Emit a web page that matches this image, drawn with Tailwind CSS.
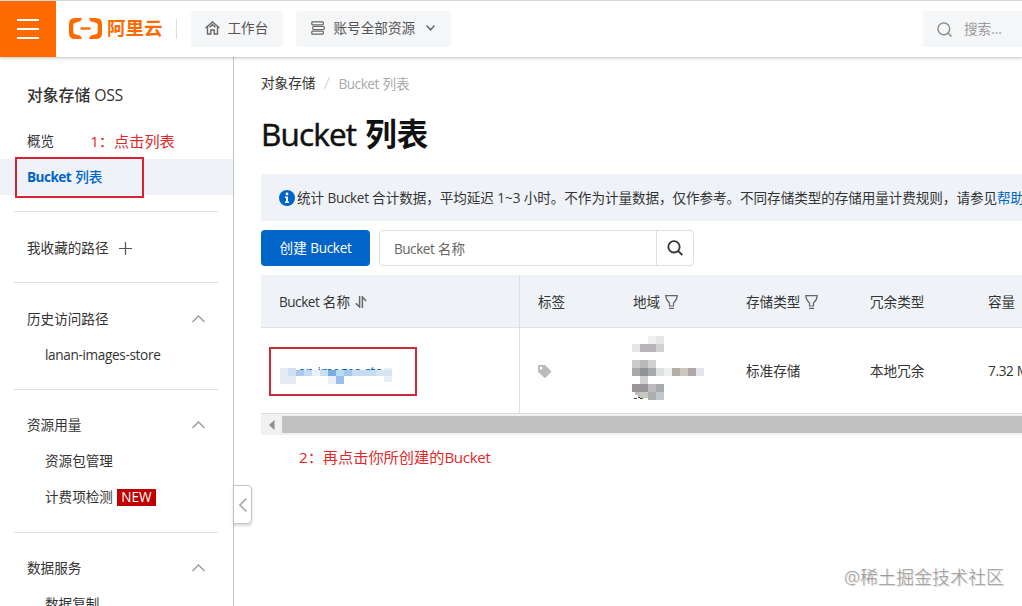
<!DOCTYPE html>
<html lang="zh-CN">
<head>
<meta charset="utf-8">
<title>Bucket 列表</title>
<script src="https://cdn.jsdelivr.net/npm/@tailwindcss/browser@4"></script>
</head>
<body class="relative flex h-[606px] w-[1022px] flex-col overflow-hidden bg-white font-['Open_Sans','Noto_Sans_CJK_SC',sans-serif] text-[13.6px] leading-5 whitespace-nowrap text-[#333]">

<!-- Top bar -->
<header class="relative z-10 flex h-[57px] shrink-0 items-center border-t border-[#d8d8d8] bg-white shadow-[0_1px_3px_rgba(0,0,0,0.25)]">
  <button class="flex h-[56px] w-[56px] items-center justify-center bg-[#ff6a00]">
    <svg class="h-[20px] w-[22px]" viewBox="0 0 22 20" stroke="#fff" stroke-width="2"><path d="M0 1h22M0 10h22M0 19h22"/></svg>
  </button>
  <svg class="mb-[2px] ml-[13px] h-[21px] w-[34px]" viewBox="0 0 34 21" fill="#ff6a00">
    <path d="M13 0H6Q0 0 0 6v9q0 6 6 6h7l-1.500-3.300-5.300-1.400Q4.300 15.900 4.300 14V7q0-1.900 1.900-2.300l5.300-1.400z"/>
    <path d="M20 0h7q6 0 6 6v9q0 6-6 6h-7l1.500-3.300 5.300-1.400q1.900-.4 1.900-2.300V7q0-1.900-1.900-2.300l-5.300-1.400z"/>
    <path d="M11.500 9.300h10v2.400h-10z"/>
  </svg>
  <span class="mb-[2px] ml-[4px] text-[18.500px] leading-6 font-bold text-[#ff6a00]">阿里云</span>
  <span class="ml-[13px] h-5 w-px bg-[#ddd]"></span>
  <button class="ml-[14px] flex h-[36px] w-[92px] items-center rounded-sm bg-[#f5f6f7] pb-[2px] pl-[14px] text-[#555]">
    <svg class="h-[14px] w-[15px]" viewBox="0 0 15 14" fill="none" stroke="#666" stroke-width="1.400"><path d="M.6 7 7.500 1l6.900 6M2.500 6v7h3.300V9h3.400v4h3.300V6M4.500 6.300l3-2.600 3 2.600"/></svg>
    <span class="ml-[8px]">工作台</span>
  </button>
  <button class="ml-[13px] flex h-[36px] w-[155px] items-center rounded-sm bg-[#f5f6f7] pb-[2px] pl-[15px] text-[#555]">
    <svg class="h-[14px] w-[14px]" viewBox="0 0 14 14" fill="none" stroke="#666" stroke-width="1.200"><rect x=".8" y=".8" width="11.500" height="3" rx=".8"/><rect x="1.800" y="5.500" width="11.500" height="3" rx=".8"/><rect x=".8" y="10.200" width="11.500" height="3" rx=".8"/></svg>
    <span class="ml-[9px]">账号全部资源</span>
    <svg class="ml-[11px] h-[6px] w-[9px]" viewBox="0 0 9 6" fill="none" stroke="#666" stroke-width="1.500"><path d="m.5.5 4 4.300 4-4.300"/></svg>
  </button>
  <div class="ml-auto flex h-[36px] w-[99px] items-center bg-[#f5f6f7] pl-[14px] text-[#999]">
    <svg class="h-[15px] w-[15px]" viewBox="0 0 15 15" fill="none" stroke="#888" stroke-width="1.400"><circle cx="6.800" cy="6.800" r="5.900"/><path d="m11 11 3.500 3.500"/></svg>
    <span class="ml-[12px]">搜索...</span>
  </div>
</header>

<div class="flex min-h-0 flex-1">
  <!-- Sidebar -->
  <aside class="relative flex h-[549px] w-[234px] shrink-0 flex-col border-r border-[#c4c4c4]">
    <h2 class="flex h-[66px] shrink-0 items-center pt-[9px] pl-[27px] text-[15.800px] font-medium">对象存储<span class="ml-1 font-normal tracking-[-0.3px]">OSS</span></h2>
    <a class="flex h-[36px] shrink-0 items-center pl-[27px]">概览<span class="ml-[36px] text-[15.200px] text-[#e02a2a]">1：点击列表</span></a>
    <a class="relative flex h-[36px] shrink-0 items-center bg-[#eff3f8] pl-[27px] font-bold text-[#0064c8]"><span class="tracking-[-0.55px]">Bucket</span><span class="ml-1 font-medium">列表</span>
      <span class="absolute top-[-2px] left-[15px] h-[41px] w-[129px] border-2 border-[#d8222f]"></span>
    </a>
    <hr class="mt-4 mr-[15px] ml-[14px] shrink-0 border-[#dedede]">
    <div class="mt-[18px] flex h-[36px] shrink-0 items-center pl-[27px]">我收藏的路径
      <svg class="ml-[10px] h-[13px] w-[13px]" viewBox="0 0 13 13" stroke="#555" stroke-width="1.200"><path d="M6.500 0v13M0 6.500h13"/></svg>
    </div>
    <hr class="mt-4 mr-[15px] ml-[14px] shrink-0 border-[#dedede]">
    <div class="mt-[18px] flex h-[36px] shrink-0 items-center justify-between pr-[28px] pl-[27px]">历史访问路径
      <svg class="h-[8px] w-[13px]" viewBox="0 0 13 8" fill="none" stroke="#999" stroke-width="1.300"><path d="m.5 7 6-6 6 6"/></svg>
    </div>
    <a class="flex h-[36px] shrink-0 items-center pl-[45px] tracking-[-0.35px]">lanan-images-store</a>
    <hr class="mt-4 mr-[15px] ml-[14px] shrink-0 border-[#dedede]">
    <div class="mt-[17px] flex h-[36px] shrink-0 items-center justify-between pr-[28px] pl-[27px]">资源用量
      <svg class="h-[8px] w-[13px]" viewBox="0 0 13 8" fill="none" stroke="#999" stroke-width="1.300"><path d="m.5 7 6-6 6 6"/></svg>
    </div>
    <a class="flex h-[36px] shrink-0 items-center pl-[45px]">资源包管理</a>
    <a class="flex h-[36px] shrink-0 items-center pl-[45px]">计费项检测<span class="ml-1 flex h-[17px] w-[39px] items-center justify-center bg-[#c00000] text-white">NEW</span></a>
    <hr class="mt-[17px] mr-[15px] ml-[14px] shrink-0 border-[#dedede]">
    <div class="mt-[17px] flex h-[36px] shrink-0 items-center justify-between pr-[28px] pl-[27px]">数据服务
      <svg class="h-[8px] w-[13px]" viewBox="0 0 13 8" fill="none" stroke="#999" stroke-width="1.300"><path d="m.5 7 6-6 6 6"/></svg>
    </div>
    <a class="flex h-[36px] shrink-0 items-center pl-[45px]">数据复制</a>
    <button class="absolute top-[428px] left-[233px] flex h-[39px] w-[19px] items-center justify-center rounded-r-sm border border-[#c4c4c4] bg-white shadow-[0_2px_3px_rgba(0,0,0,0.15)]">
      <svg class="h-[14px] w-[8px]" viewBox="0 0 8 14" fill="none" stroke="#aaa" stroke-width="1.700"><path d="M7.300.6 1 7l6.300 6.400"/></svg>
    </button>
  </aside>

  <!-- Content -->
  <main class="flex min-w-0 flex-1 flex-col pl-[27px]">
    <nav class="mt-[16px] flex h-5 shrink-0 items-center">对象存储
      <svg class="ml-[9px] h-[12px] w-[6px]" viewBox="0 0 6 12" stroke="#ccc"><path d="M.5 12 5.500 0"/></svg>
      <span class="ml-[8px] pt-px text-[#aaa]"><span class="tracking-[-0.45px]">Bucket</span> 列表</span>
    </nav>
    <h1 class="mt-[21px] flex h-10 shrink-0 items-center text-[31.500px] font-medium text-[#111]"><span class="tracking-[-0.85px] [-webkit-text-stroke:0.5px_#111]">Bucket</span><span class="ml-[9px] font-bold">列表</span></h1>
    <div class="mt-[20px] flex h-[47px] shrink-0 items-center overflow-hidden bg-[#eff3f8] pl-[18px]">
      <svg class="h-4 w-4 shrink-0" viewBox="0 0 16 16"><circle cx="8" cy="8" r="8" fill="#0064c8"/><circle cx="8" cy="3.900" r="1.400" fill="#fff"/><path d="M6 6.500h3v5h1V13H6v-1.500h1V8H6z" fill="#fff"/></svg>
      <span class="ml-[2px] tracking-[-0.075px]">统计 <span class="tracking-[-0.35px]">Bucket</span> 合计数据，平均延迟 1~3 小时。不作为计量数据，仅作参考。不同存储类型的存储用量计费规则，请参见<span class="text-[#0064c8]">帮助</span></span>
    </div>
    <div class="mt-[9px] flex h-[36px] shrink-0">
      <button class="flex w-[109px] items-center justify-center rounded-sm bg-[#0064c8] text-white">创建&nbsp;<span class="tracking-[-0.35px]">Bucket</span></button>
      <div class="ml-[9px] flex w-[315px] rounded-sm border border-[#dedede]">
        <span class="flex w-[276px] items-center pt-[2px] pl-[14px] text-[#666]"><span class="tracking-[-0.5px]">Bucket</span>&nbsp;名称</span>
        <span class="flex flex-1 items-center justify-center border-l border-[#dedede]">
          <svg class="h-4 w-4" viewBox="0 0 16 16" fill="none" stroke="#333" stroke-width="1.800"><circle cx="7" cy="6.800" r="5.700"/><path d="m11.200 11 4.200 4.200"/></svg>
        </span>
      </div>
    </div>

    <div class="mt-[9px] grid h-[53px] shrink-0 grid-cols-[259px_95px_113px_124px_118px_52px] overflow-hidden border-b border-[#dfe2e6] bg-[#eff3f8] pt-[2px]">
      <div class="-mt-[2px] flex items-center border-r border-[#dcdfe3] pt-[2px] pl-[18px]"><span class="tracking-[-0.5px]">Bucket</span>&nbsp;名称
        <svg class="ml-[5px] h-[12px] w-[12px]" viewBox="0 0 12 12" fill="none" stroke="#666" stroke-width="1.500"><path d="M4.600 0v11L.8 7.200M7.400 12V1l3.800 4"/></svg>
      </div>
      <div class="flex items-center pl-[18px]">标签</div>
      <div class="flex items-center pl-[18px]">地域
        <svg class="ml-[5px] h-[14px] w-[13px]" viewBox="0 0 13 14" fill="none" stroke="#666" stroke-width="1.200"><path d="M.8.700h11.400Q12 5 8.500 8v3h-4V8Q1 5 .8.700zM4 13.300h5"/></svg>
      </div>
      <div class="flex items-center pl-[18px]">存储类型
        <svg class="ml-[5px] h-[14px] w-[13px]" viewBox="0 0 13 14" fill="none" stroke="#666" stroke-width="1.200"><path d="M.8.700h11.400Q12 5 8.500 8v3h-4V8Q1 5 .8.700zM4 13.300h5"/></svg>
      </div>
      <div class="flex items-center pl-[18px]">冗余类型</div>
      <div class="flex items-center pl-[18px]">容量</div>
    </div>
    <div class="grid h-[86px] shrink-0 grid-cols-[259px_95px_113px_124px_118px_52px] overflow-hidden border-b border-[#dcdcdc]">
      <div class="relative flex items-center border-r border-[#dcdfe3] pt-[2px] pl-[19px] text-[#0064a8]">
        <span class="tracking-[-0.35px]">lanan-images-store</span>
        <svg class="absolute top-[36px] left-[19px] h-[24px] w-[120px]" viewBox="0 0 120 24" shape-rendering="crispEdges">
          <path fill="#fff" d="M0 6h120v18H0zM0 0h18v8H0zM104 0h16v8h-16z"/>
          <path fill="#e3eaf4" d="M0 4h8v8H0zM0 12h16v8H0z"/><path fill="#d0e0f2" d="M8 4h8v8H8z"/>
          <path fill="#a9c8ec" d="M16 6h8v6h-8z"/><path fill="#c4dbf2" d="M24 6h8v6h-8z"/>
          <path fill="#e8f1fa" d="M32 6h8v6h-8z"/><path fill="#c9dff3" d="M40 6h8v6h-8z"/>
          <path fill="#78ade2" d="M48 6h8v6h-8z"/><path fill="#b9dcef" d="M56 6h8v6h-8z"/>
          <path fill="#a5c9ed" d="M64 6h8v6h-8z"/><path fill="#c7dcf0" d="M72 6h24v6H72z"/>
          <path fill="#d8e4f1" d="M96 6h16v6H96z"/><path fill="#e7effa" d="M48 12h8v8h-8zM104 4h8v2h-8zM104 12h8v6h-8z"/>
          <path fill="#9bbfec" d="M56 12h8v8h-8z"/>
        </svg>
        <span class="absolute top-[19px] left-[8px] h-[49px] w-[148px] border-2 border-[#cc2a38]"></span>
      </div>
      <div class="flex items-center pt-[2px] pl-[17px]">
        <svg class="h-[15px] w-[15px]" viewBox="0 0 15 15"><path fill="#bbb" fill-rule="evenodd" d="M1 1h7l6.500 6.500L8 14.200 1 8zM4 2.800a1.400 1.400 0 1 0 0 2.800 1.400 1.400 0 0 0 0-2.800z"/></svg>
      </div>
      <div class="pt-[8px] pl-[17px]">
        <svg class="h-[64px] w-[72px]" viewBox="0 0 72 64" shape-rendering="crispEdges">
          <path fill="#f0f0f0" d="M16 0h8v8h-8z"/><path fill="#e6e6e6" d="M24 0h8v8h-8zM0 8h8v8H0z"/>
          <path fill="#b9b4b9" d="M8 8h16v8H8z"/><path fill="#d2d2d2" d="M24 8h8v8h-8zM16 24h8v8h-8zM8 40h8v8H8z"/>
          <path fill="#cacaca" d="M0 24h8v8H0z"/><path fill="#b8b9bb" d="M8 24h8v8H8z"/>
          <path fill="#a9a9ab" d="M0 32h8v8H0zM16 32h8v8h-8z"/><path fill="#8f9397" d="M8 32h8v8H8z"/>
          <path fill="#dde1e1" d="M24 32h8v8h-8z"/><path fill="#eee" d="M32 32h8v8h-8z"/>
          <path fill="#b4aea6" d="M40 32h8v8h-8z"/><path fill="#ccc7ba" d="M48 32h8v8h-8z"/>
          <path fill="#aea8aa" d="M56 32h8v8h-8z"/><path fill="#e3e3eb" d="M64 32h8v8h-8z"/>
          <path fill="#989498" d="M0 48h16v8H0z"/><path fill="#bfbabe" d="M16 48h8v8h-8z"/><path fill="#a8acae" d="M24 48h8v8h-8z"/>
          <path fill="#bcbdb5" d="M3 56h5v6H6v-3H3z"/><path fill="#444" d="M2 62h3v1H2zM6 61h2v1H6zM8 62h3v1H8z"/>
          <path fill="#c9cabf" d="M8 56h8v6H8z"/><path fill="#abafac" d="M16 56h8v8h-8z"/><path fill="#bfc8ca" d="M24 56h8v8h-8z"/>
        </svg>
      </div>
      <div class="flex items-center pl-[18px]">标准存储</div>
      <div class="flex items-center pl-[18px]">本地冗余</div>
      <div class="flex items-center pl-[18px] tracking-[-0.35px]">7.32 MB</div>
    </div>
    <!-- Horizontal scrollbar -->
    <div class="flex h-[21px] shrink-0 items-center bg-[#f1f1f1]">
      <svg class="ml-[8px] h-[10px] w-[6px]" viewBox="0 0 6 10" fill="#8c8c8c"><path d="M5.500 0v10L0 5z"/></svg>
      <div class="ml-[7px] h-[17px] flex-1 bg-[#c1c1c1]"></div>
    </div>
    <p class="mt-[12px] ml-[38px] text-[15.200px] text-[#e02a2a]">2：再点击你所创建的<span class="tracking-[-0.35px]">Bucket</span></p>
    <p class="mt-auto mr-[18px] mb-[17px] self-end text-[18px] leading-6 font-light text-[#999] [text-shadow:1px_1px_1px_#ccc]">@稀土掘金技术社区</p>
  </main>
</div>
</body>
</html>
